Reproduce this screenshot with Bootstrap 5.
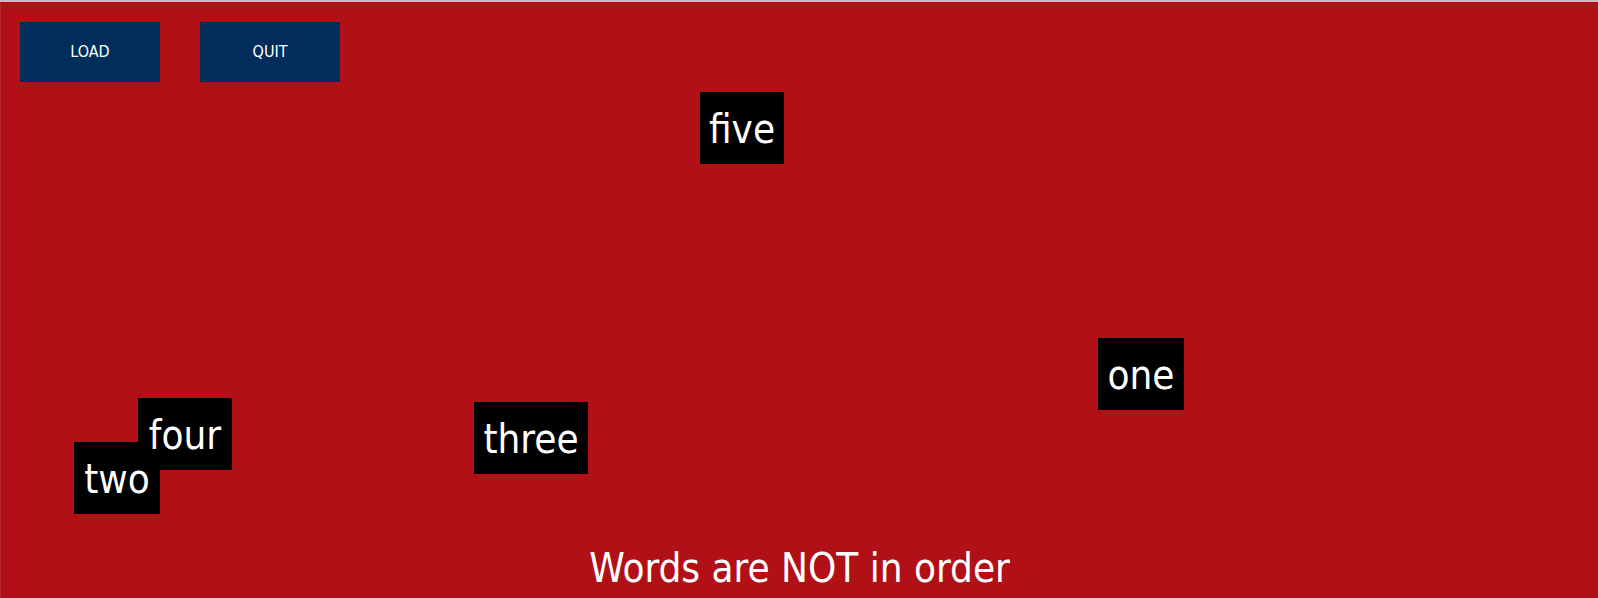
<!DOCTYPE html>
<html lang="en">
<head>
<meta charset="utf-8">
<meta name="viewport" content="width=device-width, initial-scale=1">
<title>Word order</title>
<link href="https://cdn.jsdelivr.net/npm/bootstrap@5.3.0/dist/css/bootstrap.min.css" rel="stylesheet">
<style>
  body { background: #b11016; font-family: "DejaVu Sans Condensed", "DejaVu Sans", sans-serif; border-top: 2px solid #c0c0c0; }
  .stage { border-left: 1px solid #b5262c; }
  .toolbar { padding: 20px 19px; gap: 40px; }
  .btn-tool { --bs-btn-color: #fff; --bs-btn-bg: #002d5a; --bs-btn-hover-color: #fff; --bs-btn-hover-bg: #00468c; --bs-btn-active-color: #fff; --bs-btn-active-bg: #0074d9; --bs-btn-border-width: 0; --bs-btn-font-size: 16px; --bs-btn-font-family: "DejaVu Sans Condensed", "DejaVu Sans", sans-serif; width: 140px; height: 60px; }
  .tile, .verdict { color: #fff; font-size: 40px; white-space: nowrap; }
  .tile { position: absolute; height: 72px; line-height: 74px; background: #000; text-align: center; cursor: move; }
  .tile-five { left: 699px; top: 90px; width: 84px; }
  .tile-one { left: 1097px; top: 336px; width: 86px; }
  .tile-two { left: 73px; top: 440px; width: 86px; }
  .tile-four { left: 137px; top: 396px; width: 94px; }
  .tile-three { left: 473px; top: 400px; width: 114px; }
  .verdict { line-height: 60px; }
</style>
</head>
<body class="min-vh-100 d-flex flex-column">
<main class="stage position-relative flex-grow-1 d-flex flex-column">
  <div class="toolbar d-flex">
    <button type="button" class="btn btn-tool rounded-0">LOAD</button>
    <button type="button" class="btn btn-tool rounded-0">QUIT</button>
  </div>
  <div class="tile tile-one">one</div>
  <div class="tile tile-two">two</div>
  <div class="tile tile-three">three</div>
  <div class="tile tile-four">four</div>
  <div class="tile tile-five">five</div>
  <p class="verdict mt-auto mb-0 text-center" role="status">Words are NOT in order</p>
</main>
<script src="https://cdn.jsdelivr.net/npm/bootstrap@5.3.0/dist/js/bootstrap.bundle.min.js"></script>
</body>
</html>
